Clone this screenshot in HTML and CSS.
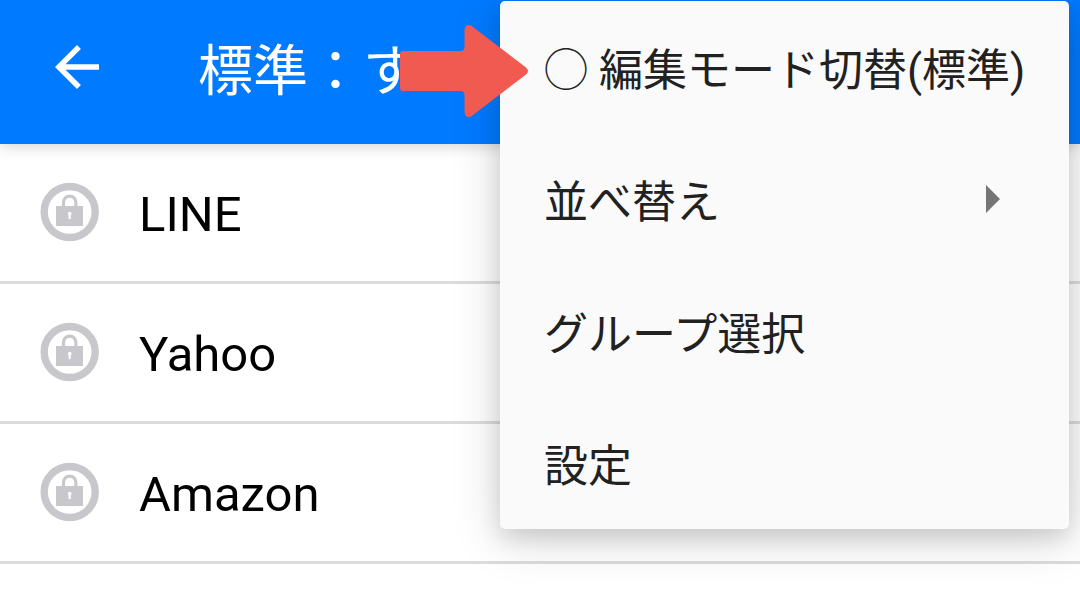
FILE: index.html
```html
<!DOCTYPE html>
<html lang="ja">
<head>
<meta charset="utf-8">
<meta name="viewport" content="width=device-width, initial-scale=1">
<title>標準</title>
<link rel="stylesheet" href="styles.css">
</head>
<body>
<svg class="defs" aria-hidden="true">
  <symbol id="lock" viewBox="0 0 60 60">
    <circle cx="29.700" cy="30" r="25.5" fill="none" stroke="currentColor" stroke-width="7.4"/>
    <path d="M23.5 25V20.300a6.2 6.2 0 0 1 12.4 0V25" fill="none" stroke="currentColor" stroke-width="3.2"/>
    <path d="M16 24H43V44H16Z" fill="currentColor"/>
    <path d="M29.700 29.700a2 2 0 0 1 1.100 3.600V37H28.600V33.300A2 2 0 0 1 29.700 29.700Z" fill="#fff"/>
  </symbol>
</svg>
<header class="bar">
  <button class="back" type="button" aria-label="戻る">
    <svg viewBox="0 0 16 16"><path d="M16 7H3.830l5.590-5.590L8 0 0 8l8 8 1.410-1.410L3.830 9H16Z" fill="#fff"/></svg>
  </button>
  <h1 class="title">標準：す</h1>
</header>
<main>
  <ul class="list">
    <li class="row"><svg class="lock"><use href="#lock"/></svg><span>LINE</span></li>
    <li class="row"><svg class="lock"><use href="#lock"/></svg><span>Yahoo</span></li>
    <li class="row"><svg class="lock"><use href="#lock"/></svg><span>Amazon</span></li>
  </ul>
</main>
<div class="menu" role="menu">
  <button class="item" type="button" role="menuitem">◯ 編集モード切替(標準)</button>
  <button class="item" type="button" role="menuitem" aria-haspopup="menu">並べ替え
    <svg class="more" viewBox="0 0 14 28"><path d="M0 0 14 14 0 28Z" fill="#757575"/></svg>
  </button>
  <button class="item" type="button" role="menuitem">グループ選択</button>
  <button class="item" type="button" role="menuitem">設定</button>
</div>
<svg class="pointer" viewBox="0 0 128 92" aria-hidden="true">
  <path d="M3 26H60Q64.500 26 64.500 22V5Q64.500 0 69 0Q71 0 73 2L126 42.500Q130 46 126 49.500L73 90Q71 92 69 92Q64.500 92 64.500 87V70Q64.500 66 60 66H3Q0 66 0 63V29Q0 26 3 26Z" fill="#f05a50"/>
</svg>
</body>
</html>
```
FILE: styles.css
```css
* {
  box-sizing: border-box;
}

body {
  margin: 0;
  min-height: 100vh;
  overflow: hidden;
  background: #fff;
  color: #000;
  font-family: Roboto, "Noto Sans CJK JP", sans-serif;
}

button {
  margin: 0;
  border: 0;
  background: none;
  font: inherit;
  color: inherit;
}

.defs {
  position: absolute;
  width: 0;
  height: 0;
}

.bar {
  position: relative;
  display: flex;
  align-items: center;
  height: 144px;
  padding: 0 55px 10px;
  background: #007aff;
  color: #fff;
  box-shadow: 0 2px 14px rgba(0, 0, 0, 0.18);
}

.back {
  padding: 0;
  width: 143px;
  text-align: left;
}

.back svg {
  display: block;
  width: 44px;
  height: 44px;
}

.title {
  margin: 0;
  padding-top: 8px;
  font-size: 55px;
  font-weight: 400;
  line-height: 64px;
  white-space: nowrap;
}

.list {
  margin: 0;
  padding: 0;
  list-style: none;
}

.row {
  display: flex;
  align-items: center;
  gap: 39px;
  height: 140px;
  padding: 4px 40px 0;
  border-bottom: 3px solid #dcdcdc;
  font-size: 49px;
}

.lock {
  flex: none;
  width: 60px;
  height: 60px;
  margin-bottom: 6px;
  color: #c7c7cc;
}

.menu {
  position: absolute;
  top: 1px;
  right: 11px;
  width: 569px;
  border-radius: 5px;
  background: #fafafa;
  color: #212121;
  box-shadow: 0 10px 50px rgba(0, 0, 0, 0.16), 0 8px 22px rgba(0, 0, 0, 0.12);
}

.item {
  display: flex;
  align-items: center;
  justify-content: space-between;
  width: 100%;
  height: 132px;
  padding: 0 69px 0 44px;
  font-size: 44px;
  text-align: left;
  white-space: nowrap;
}

.item:first-child {
  padding-right: 0;
}

.more {
  width: 14px;
  height: 28px;
}

.pointer {
  position: absolute;
  top: 25px;
  left: 400px;
  width: 128px;
  height: 92px;
}
```
